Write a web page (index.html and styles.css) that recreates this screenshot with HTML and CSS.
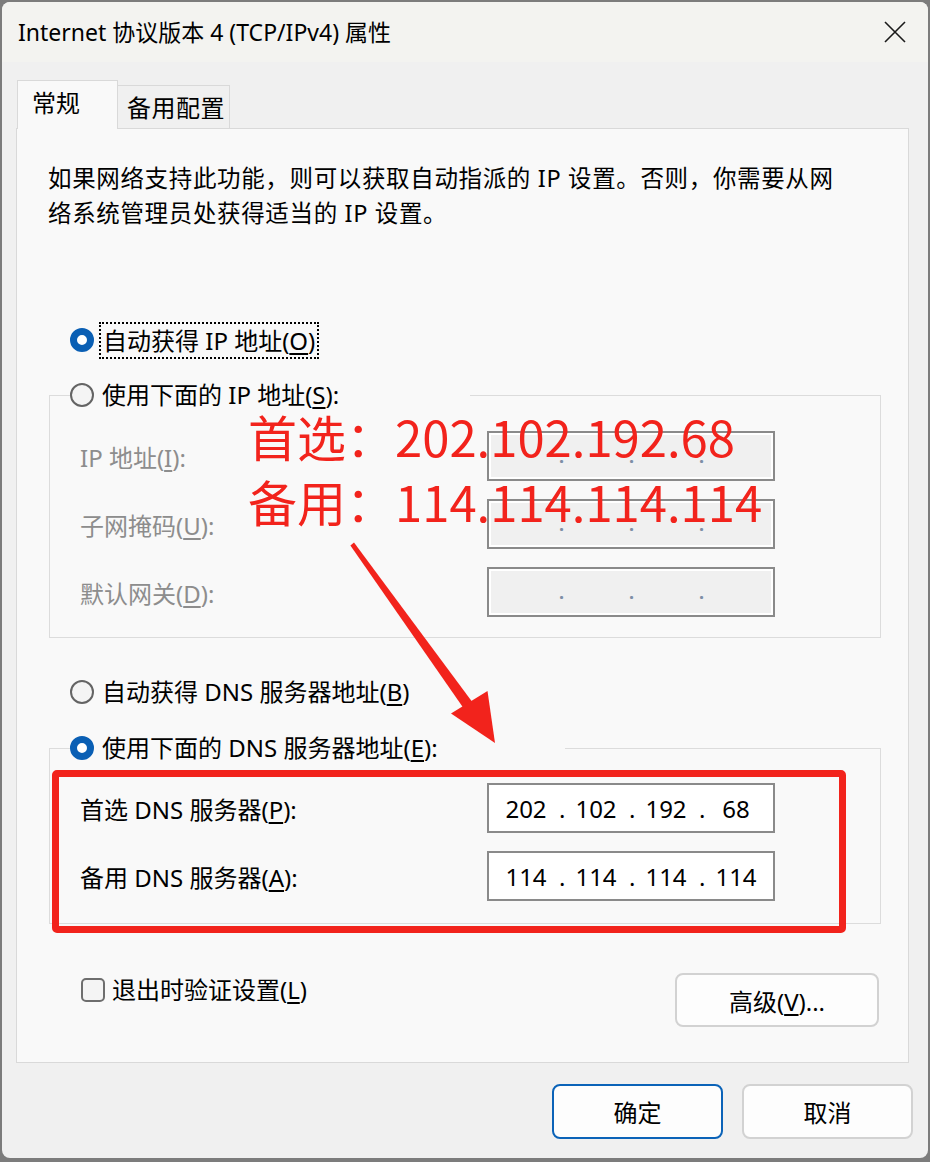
FILE: index.html
```html
<!DOCTYPE html>
<html lang="zh-CN">
<head>
<meta charset="utf-8">
<title>Internet 协议版本 4 (TCP/IPv4) 属性</title>
<link rel="stylesheet" href="styles.css">
</head>
<body>
<div class="window">
  <div class="titlebar">
    <span class="title">Internet 协议版本 4 (TCP/IPv4) 属性</span>
    <svg class="close" width="22" height="22" viewBox="0 0 22 22"><path d="M1 1 L21 21 M21 1 L1 21" stroke="#1a1a1a" stroke-width="1.6" fill="none"/></svg>
  </div>
  <div class="content">
    <div class="tabs">
      <div class="tab active">常规</div>
      <div class="tab">备用配置</div>
    </div>
    <div class="panel">
      <p class="desc">如果网络支持此功能，则可以获取自动指派的 IP 设置。否则，你需要从网<br>络系统管理员处获得适当的 IP 设置。</p>

      <div class="radio-row r1"><span class="radio checked"></span><span class="focus">自动获得 IP 地址(<u>O</u>)</span></div>

      <fieldset class="group g1">
        <legend class="radio-row leg1"><span class="radio"></span><span>使用下面的 IP 地址(<u>S</u>):</span></legend>
        <div class="field disabled"><span class="lbl">IP 地址(<u>I</u>):</span>
          <div class="ipbox off"><span class="seg"></span><span class="dot">.</span><span class="seg"></span><span class="dot">.</span><span class="seg"></span><span class="dot">.</span><span class="seg"></span></div>
        </div>
        <div class="field disabled"><span class="lbl">子网掩码(<u>U</u>):</span>
          <div class="ipbox off"><span class="seg"></span><span class="dot">.</span><span class="seg"></span><span class="dot">.</span><span class="seg"></span><span class="dot">.</span><span class="seg"></span></div>
        </div>
        <div class="field disabled"><span class="lbl">默认网关(<u>D</u>):</span>
          <div class="ipbox off"><span class="seg"></span><span class="dot">.</span><span class="seg"></span><span class="dot">.</span><span class="seg"></span><span class="dot">.</span><span class="seg"></span></div>
        </div>
      </fieldset>

      <div class="radio-row r3"><span class="radio"></span><span>自动获得 DNS 服务器地址(<u>B</u>)</span></div>

      <fieldset class="group g2">
        <legend class="radio-row leg2"><span class="radio checked"></span><span>使用下面的 DNS 服务器地址(<u>E</u>):</span></legend>
        <div class="field"><span class="lbl">首选 DNS 服务器(<u>P</u>):</span>
          <div class="ipbox"><span class="seg">202</span><span class="dot">.</span><span class="seg">102</span><span class="dot">.</span><span class="seg">192</span><span class="dot">.</span><span class="seg">68</span></div>
        </div>
        <div class="field"><span class="lbl">备用 DNS 服务器(<u>A</u>):</span>
          <div class="ipbox"><span class="seg">114</span><span class="dot">.</span><span class="seg">114</span><span class="dot">.</span><span class="seg">114</span><span class="dot">.</span><span class="seg">114</span></div>
        </div>
      </fieldset>

      <div class="bottom-row">
        <div class="check"><span class="box"></span><span>退出时验证设置(<u>L</u>)</span></div>
        <button class="btn adv">高级(<u>V</u>)...</button>
      </div>
    </div>
    <div class="footer">
      <button class="btn primary">确定</button>
      <button class="btn">取消</button>
    </div>
  </div>

  <div class="annot">
    <div class="red-line">首选：202.102.192.68</div>
    <div class="red-line">备用：114.114.114.114</div>
  </div>
  <div class="red-box"></div>
  <svg class="arrow" width="926" height="1156" viewBox="0 0 926 1156">
    <g transform="translate(-2,-2)">
      <polygon points="350.4,545.6 354,542.6 474.5,705 465.5,711" fill="#f2231c"/>
      <polygon points="451,713.5 487.5,691 495,743" fill="#f2231c"/>
    </g>
  </svg>
</div>
</body>
</html>
```
FILE: styles.css
```css
html, body {
  margin: 0;
  padding: 0;
}
body {
  background: #7c7c7c;
  font-family: "Noto Sans", "Noto Sans CJK SC", sans-serif;
  color: #000;
  padding: 2px;
  width: 926px;
}
.window {
  position: relative;
  width: 926px;
  height: 1156px;
  border-radius: 8px;
  background: #f0f0f0;
  overflow: hidden;
  display: flex;
  flex-direction: column;
}
.titlebar {
  height: 60px;
  flex: none;
  background: #f3f3f0;
  display: flex;
  align-items: center;
  justify-content: space-between;
  padding: 0 22px 0 16px;
}
.title {
  font-size: 23px;
  line-height: 30px;
}
.close {
  display: block;
}
.content {
  padding: 18px 0 0 14px;
}
.tabs {
  display: flex;
  align-items: flex-start;
  height: 49px;
  margin-bottom: -1px;
  position: relative;
  z-index: 1;
  font-size: 24px;
  line-height: 30px;
}
.tab {
  box-sizing: border-box;
  border: 1px solid #d9d9d9;
  border-bottom: none;
}
.tab.active {
  margin-left: 1px;
  width: 101px;
  height: 49px;
  background: #f9f9f9;
  padding: 7px 0 0 14px;
  position: relative;
  z-index: 2;
}
.tab:not(.active) {
  margin-top: 5px;
  margin-left: -1px;
  width: 113px;
  height: 43px;
  background: #f0f0f0;
  padding: 7px 0 0 9px;
  letter-spacing: 0.5px;
}
.panel {
  box-sizing: border-box;
  width: 893px;
  border: 1px solid #d9d9d9;
  background: #f9f9f9;
  padding: 32px 0 35px 0;
  font-size: 24px;
}
.desc {
  margin: 0 0 0 31px;
  line-height: 35px;
  font-size: 23.5px;
  letter-spacing: 0.65px;
}
u {
  text-decoration: underline;
  text-decoration-thickness: 1.5px;
  text-underline-offset: 3px;
}
.radio-row {
  display: flex;
  align-items: center;
  height: 34px;
  line-height: 34px;
  gap: 8px;
  white-space: nowrap;
}
.radio {
  box-sizing: border-box;
  width: 24px;
  height: 24px;
  border-radius: 50%;
  border: 2px solid #646464;
  background: #f4f4f4;
  flex: none;
}
.radio.checked {
  border: 7px solid #0a5fb4;
  background: #fff;
}
.r1 {
  margin: 92px 0 0 53px;
}
.focus {
  outline: 2px dotted #000;
  outline-offset: 0;
  padding: 0 2px;
  line-height: 33px;
}
.r1 .focus {
  margin-left: -1px;
}
.r3 {
  margin: 37px 0 0 53px;
}
.group {
  box-sizing: border-box;
  width: 832px;
  min-width: 0;
  margin: 21px 0 0 32px;
  border: 1px solid #dcdcdc;
  padding: 19px 0 20px 30px;
}
.g2 {
  margin-top: 22px;
  padding: 18px 0 22px 30px;
}
.group legend {
  padding: 0;
  margin-left: -10px;
  box-sizing: border-box;
}
.leg1 { width: 400px; }
.leg2 { width: 495px; }
.field {
  display: flex;
  align-items: center;
  height: 50px;
}
.field + .field {
  margin-top: 18px;
}
.lbl {
  width: 407px;
  flex: none;
  white-space: nowrap;
}
.disabled .lbl {
  color: #8d8d8d;
}
.ipbox {
  box-sizing: border-box;
  width: 288px;
  height: 50px;
  border: 2px solid #8a8a8a;
  background: #fff;
  display: flex;
  align-items: center;
  padding-left: 4px;
  font-size: 24px;
}
.ipbox.off {
  background: #f0f0f0;
  box-shadow: inset 0 0 0 2px #fff;
}
.seg {
  width: 66px;
  text-align: center;
}
.dot {
  width: 4px;
  text-align: center;
}
.off .dot {
  color: #7d8fa6;
  font-size: 18px;
  font-weight: bold;
}
.bottom-row {
  display: flex;
  justify-content: space-between;
  align-items: flex-start;
  margin: 49px 29px 0 64px;
}
.check {
  display: flex;
  align-items: center;
  gap: 7px;
  height: 34px;
  line-height: 34px;
}
.box {
  box-sizing: border-box;
  width: 24px;
  height: 24px;
  border: 2px solid #6e6e6e;
  border-radius: 5px;
  background: #f4f4f4;
}
.btn {
  box-sizing: border-box;
  font-family: inherit;
  font-size: 24px;
  color: #000;
  background: #fdfdfd;
  border: 2px solid #d2d2d2;
  border-radius: 8px;
  padding: 0;
}
.adv {
  width: 204px;
  height: 54px;
}
.footer {
  display: flex;
  justify-content: flex-end;
  gap: 19px;
  padding: 21px 15px 0 0;
}
.footer .btn {
  width: 171px;
  height: 55px;
}
.btn.primary {
  border-color: #0b63b8;
}
.annot {
  position: absolute;
  left: 246px;
  top: 401px;
  color: #f2231c;
  font-family: "Noto Sans CJK SC", sans-serif;
  font-size: 49px;
  line-height: 65px;
  white-space: nowrap;
}
.red-box {
  position: absolute;
  left: 50px;
  top: 768px;
  width: 794px;
  height: 163px;
  box-sizing: border-box;
  border: 7px solid #f2231c;
  border-radius: 5px;
}
.arrow {
  position: absolute;
  left: 0;
  top: 0;
  pointer-events: none;
}
```
